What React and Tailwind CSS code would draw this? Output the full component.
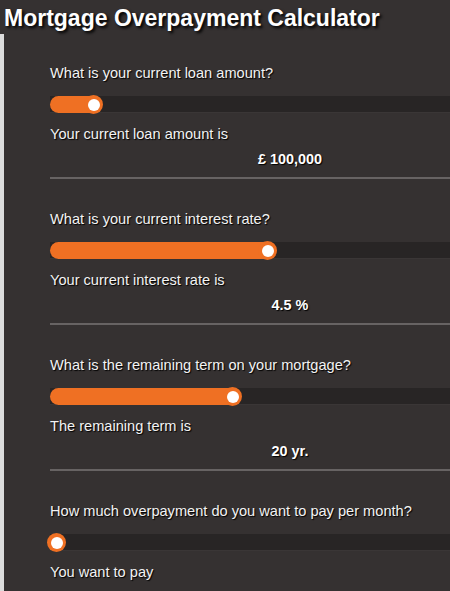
import React from 'react';

const sections = [
  { question: 'What is your current loan amount?', result: 'Your current loan amount is', value: '£ 100,000', fill: 52 },
  { question: 'What is your current interest rate?', result: 'Your current interest rate is', value: '4.5 %', fill: 226 },
  { question: 'What is the remaining term on your mortgage?', result: 'The remaining term is', value: '20 yr.', fill: 191 },
  { question: 'How much overpayment do you want to pay per month?', result: 'You want to pay', value: '', fill: 0 },
];

const Slider = ({ fill }) => {
  // thumb sits at the right end of the orange pill
  const thumbLeft = fill > 0 ? fill - 18 : -3;
  return (
    <div className="relative h-[17px] w-full bg-[#282525] border-b border-[#3a3636]">
      {fill > 0 && (
        <div
          className="absolute left-0 top-0 h-[17px] rounded-full bg-[#ef7023]"
          style={{ width: fill }}
        />
      )}
      <div
        className="absolute top-[-1px] h-[19px] w-[19px] rounded-full bg-[#ef7023] flex items-center justify-center"
        style={{ left: thumbLeft }}
      >
        <div className="h-[12px] w-[12px] rounded-full bg-white" />
      </div>
    </div>
  );
};

const App = () => {
  return (
    <div
      className="w-[450px] h-[591px] overflow-hidden bg-[#353131] text-[#f3f3f3]"
      style={{ fontFamily: '"Liberation Sans", Arial, sans-serif' }}
    >
      <h1 className="pt-[2px] pl-[4px] text-[23px] leading-[32px] font-bold text-white whitespace-nowrap [text-shadow:2px_2px_3px_#000]">
        Mortgage Overpayment Calculator
      </h1>

      <div className="border-l-4 border-[#dcdcdc] pl-[46px] pt-[29px] h-full">
        <div className="w-[480px]">
          {sections.map((s, i) => (
            <div key={i} className={i > 0 ? 'mt-[30px]' : ''}>
              <div className="text-[14.6px] leading-[20px] whitespace-nowrap [text-shadow:1px_1px_1px_#000]">
                {s.question}
              </div>
              <div className="mt-[13px]">
                <Slider fill={s.fill} />
              </div>
              <div className="mt-[11px] text-[14.6px] leading-[20px] [text-shadow:1px_1px_1px_#000]">
                {s.result}
              </div>
              {s.value && (
                <>
                  <div className="mt-[5px] text-center text-[14.4px] leading-[20px] font-bold text-white [text-shadow:1px_1px_1px_#000]">
                    {s.value}
                  </div>
                  <div className="mt-[8px] h-[2px] bg-[#676363]" />
                </>
              )}
            </div>
          ))}
        </div>
      </div>
    </div>
  );
};

export default App;
